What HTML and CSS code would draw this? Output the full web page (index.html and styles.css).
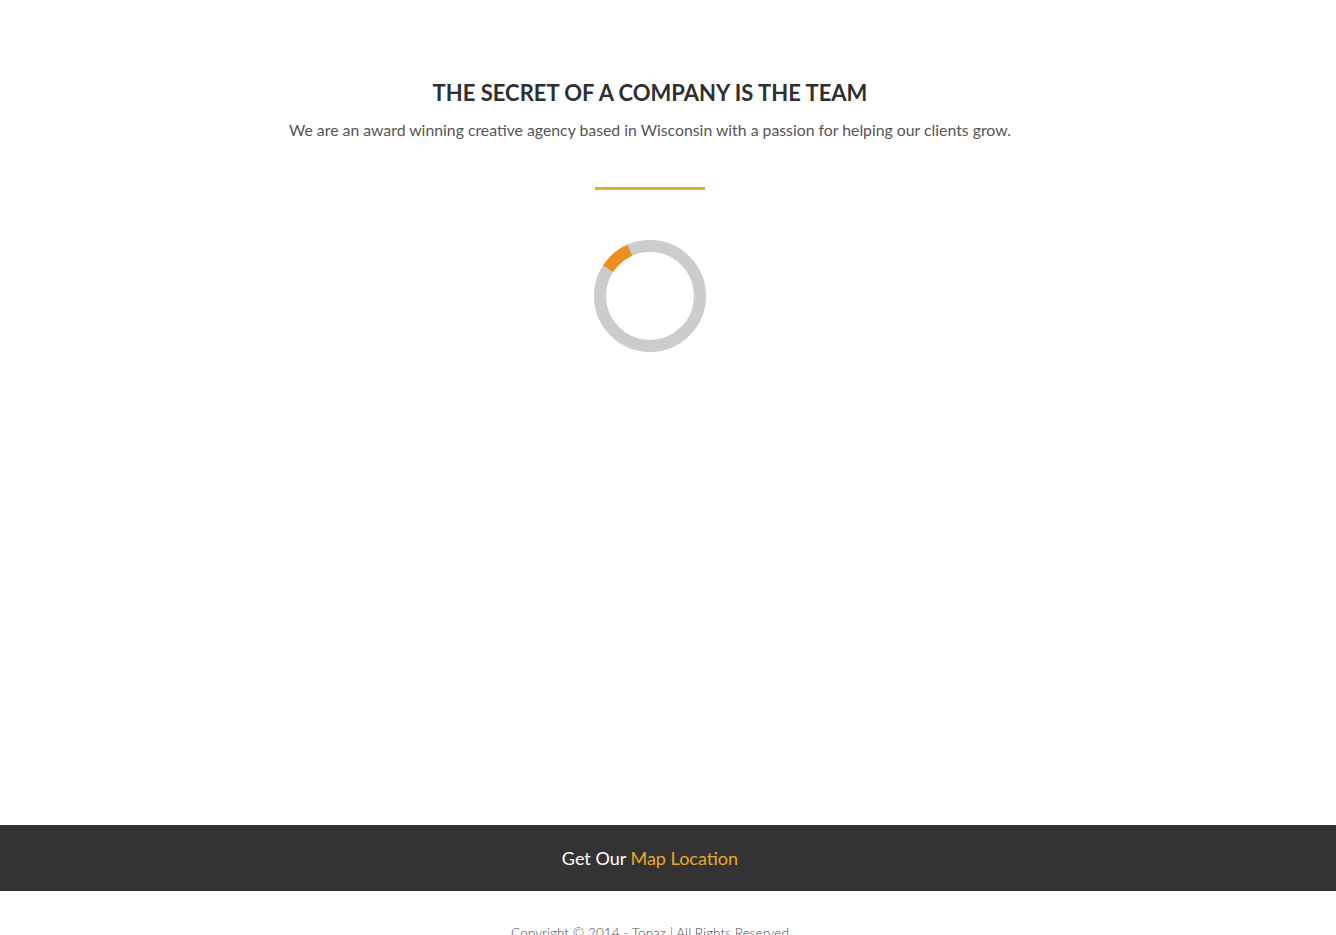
FILE: index.html
```html
<!DOCTYPE html>
<html lang="en">
<head>
<meta charset="utf-8">
<title>Team</title>
<link rel="stylesheet" href="styles.css">
</head>
<body>
<main class="team">
  <div class="wrap">
    <h2 class="title">THE SECRET OF A COMPANY IS THE TEAM</h2>
    <p class="lead">We are an award winning creative agency based in Wisconsin with a passion for helping our clients grow.</p>
    <div class="divider"></div>
    <div class="loader">
      <svg width="112" height="112" viewBox="0 0 112 112">
        <circle cx="56" cy="56" r="50" fill="none" stroke="#cccccc" stroke-width="12"/>
        <circle cx="56" cy="56" r="50" fill="none" stroke="#ee8e1f" stroke-width="12" stroke-dasharray="29 300" transform="rotate(213 56 56)"/>
      </svg>
    </div>
  </div>
</main>
<section class="map-bar">
  <div class="wrap">
    <p class="map-text">Get Our <span class="accent">Map Location</span></p>
  </div>
</section>
<footer class="footer">
  <div class="wrap">
    <p class="copy">Copyright © 2014 - Topaz | All Rights Reserved</p>
  </div>
</footer>
</body>
</html>
```
FILE: styles.css
```css
html, body {
  margin: 0;
  padding: 0;
  background: #ffffff;
}
body {
  font-family: Lato, "Open Sans", "Liberation Sans", sans-serif;
  color: #333;
}
.wrap {
  width: 1300px;
  text-align: center;
}
.team {
  height: 825px;
  box-sizing: border-box;
  padding-top: 80px;
}
.title {
  margin: 0;
  font-size: 22px;
  line-height: 26px;
  font-weight: 700;
  color: #2f2f2f;
}
.lead {
  margin: 14px 0 0;
  font-size: 15.8px;
  line-height: 19px;
  color: #555;
}
.divider {
  width: 110px;
  height: 3px;
  background: #e5a92d;
  margin: 48px auto 0;
}
.loader {
  margin: 50px auto 0;
  width: 112px;
  height: 112px;
}
.loader svg {
  display: block;
}
.map-bar {
  background: #333333;
  height: 66px;
  display: flex;
  align-items: center;
}
.map-text {
  margin: 0;
  font-size: 18px;
  line-height: 22px;
  color: #ffffff;
}
.accent {
  color: #eaa829;
}
.footer {
  padding-top: 33px;
}
.copy {
  margin: 0;
  font-size: 13.7px;
  font-weight: 300;
  line-height: 17px;
  color: #4a4a4a;
}
```
